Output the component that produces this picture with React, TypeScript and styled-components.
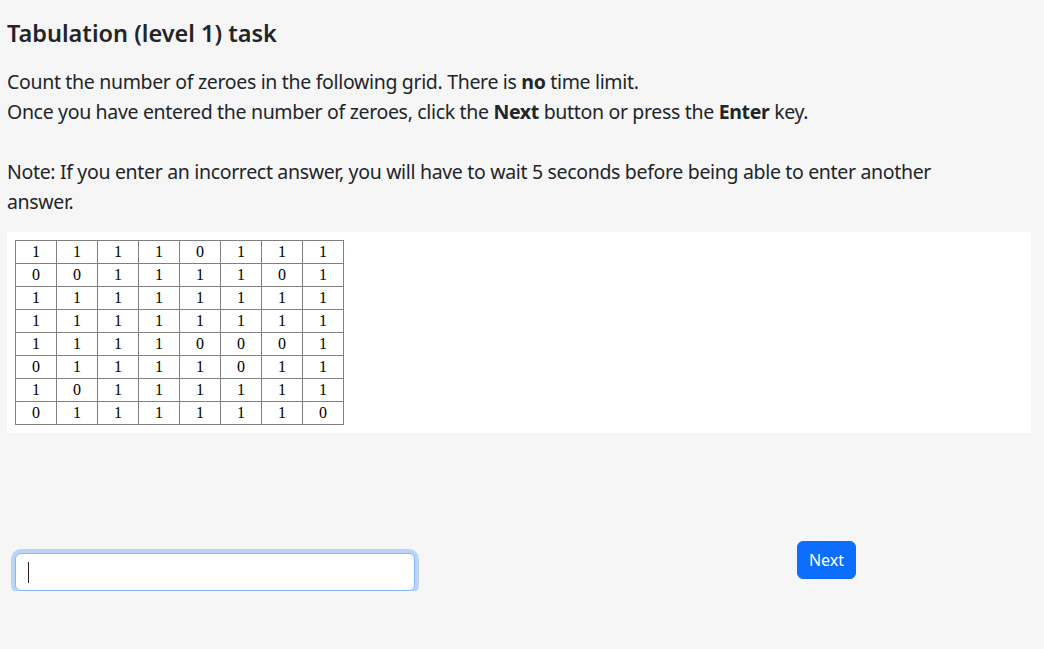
import React from "react";
import styled, { createGlobalStyle } from "styled-components";

const GlobalStyle = createGlobalStyle`
  html, body {
    margin: 0;
    padding: 0;
    background: #f6f6f6;
  }
  body {
    font-family: "Noto Sans", "Open Sans", sans-serif;
    color: #212529;
  }
`;

const Page = styled.div`
  padding: 17px 13px 0 7px;
  width: 1024px;
`;

const Title = styled.h4`
  margin: 0 0 18px 0;
  font-size: 23.5px;
  font-weight: 600;
  line-height: 32px;
`;

const Lead = styled.p`
  margin: 0 0 15px 0;
  max-width: 950px;
  font-size: 19.5px;
  letter-spacing: -0.33px;
  line-height: 30px;
  font-weight: 400;
`;

const Panel = styled.div`
  background: #ffffff;
  padding: 8px;
`;

const Grid = styled.table`
  border-collapse: collapse;
  font-family: "Liberation Serif", "Times New Roman", serif;
  font-size: 16px;
  color: #000;
`;

const Cell = styled.td`
  border: 1px solid #808080;
  width: 40px;
  height: 22px;
  padding: 0;
  text-align: center;
  vertical-align: middle;
  line-height: 18px;
`;

const Footer = styled.div`
  display: flex;
  align-items: flex-start;
  padding: 108px 0 0 8px;
`;

const InputWrap = styled.div`
  position: relative;
  margin-top: 12px;
`;

const AnswerInput = styled.input`
  display: block;
  box-sizing: border-box;
  width: 400px;
  height: 38px;
  padding: 6px 12px;
  font-family: inherit;
  font-size: 16px;
  color: #212529;
  background: #fff;
  border: 1px solid #86b7fe;
  border-radius: 6px;
  outline: none;
  caret-color: transparent;
  box-shadow: 0 0 0 4px rgba(13, 110, 253, 0.25);
`;

const Caret = styled.span`
  position: absolute;
  left: 13px;
  top: 9px;
  width: 1px;
  height: 21px;
  background: #212529;
  pointer-events: none;
`;

const NextButton = styled.button`
  box-sizing: border-box;
  margin-left: 382px;
  width: 59px;
  height: 38px;
  padding: 0;
  font-family: inherit;
  font-size: 16px;
  color: #fff;
  background: #0d6efd;
  border: 1px solid #0d6efd;
  border-radius: 6px;
  cursor: pointer;
`;

const rows = [
  [1, 1, 1, 1, 0, 1, 1, 1],
  [0, 0, 1, 1, 1, 1, 0, 1],
  [1, 1, 1, 1, 1, 1, 1, 1],
  [1, 1, 1, 1, 1, 1, 1, 1],
  [1, 1, 1, 1, 0, 0, 0, 1],
  [0, 1, 1, 1, 1, 0, 1, 1],
  [1, 0, 1, 1, 1, 1, 1, 1],
  [0, 1, 1, 1, 1, 1, 1, 0],
];

export default function App() {
  return (
    <>
      <GlobalStyle />
      <Page>
        <Title>Tabulation (level 1) task</Title>
        <Lead>
          Count the number of zeroes in the following grid. There is <b>no</b> time limit.
          <br />
          Once you have entered the number of zeroes, click the <b>Next</b> button or press the{" "}
          <b>Enter</b> key.
          <br />
          <br />
          Note: If you enter an incorrect answer, you will have to wait 5 seconds before being able to enter another
          answer.
        </Lead>
        <Panel>
          <Grid>
            <tbody>
              {rows.map((r, i) => (
                <tr key={i}>
                  {r.map((v, j) => (
                    <Cell key={j}>{v}</Cell>
                  ))}
                </tr>
              ))}
            </tbody>
          </Grid>
        </Panel>
        <Footer>
          <InputWrap>
            <AnswerInput type="text" />
            <Caret />
          </InputWrap>
          <NextButton>Next</NextButton>
        </Footer>
      </Page>
    </>
  );
}
